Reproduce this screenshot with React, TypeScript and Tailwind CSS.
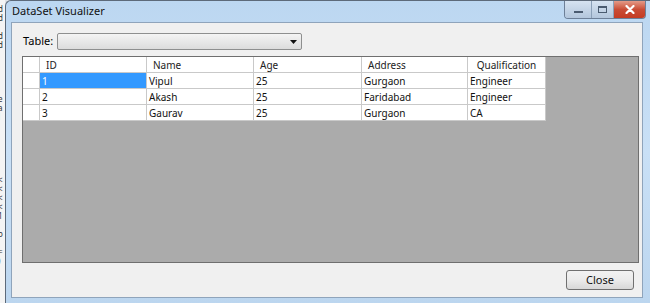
const COLS = [
  { key: 'ID', w: 107 },
  { key: 'Name', w: 107 },
  { key: 'Age', w: 108 },
  { key: 'Address', w: 106 },
  { key: 'Qualification', w: 78 },
]

const ROWS = [
  ['1', 'Vipul', '25', 'Gurgaon', 'Engineer'],
  ['2', 'Akash', '25', 'Faridabad', 'Engineer'],
  ['3', 'Gaurav', '25', 'Gurgaon', 'CA'],
]

// fragments of the code editor peeking out behind the dialog
const BEHIND = ['d', 'd', '', 'd', 'd', '', '', '', '', '', 'e', 'a', 'l', '', '', '', '', '', '', '<', '<', '<', '<', '1', '', 'o', '', '=', ')']

function TitleButtons() {
  return (
    <div className="flex h-[18px] self-start overflow-hidden rounded-b-[4px] border border-t-0 border-[#6d7f97]">
      <div className="flex w-[27px] items-center justify-center border-r border-[#8ba0b8] bg-gradient-to-b from-[#d6e3f1] to-[#b3c6dc]">
        <div className="mt-[5px] h-[2px] w-[9px] bg-[#4a5b70]" />
      </div>
      <div className="flex w-[22px] items-center justify-center border-r border-[#8ba0b8] bg-gradient-to-b from-[#d6e3f1] to-[#b3c6dc]">
        <div className="h-[7px] w-[9px] border border-t-2 border-[#4a5b70]" />
      </div>
      <div className="flex w-[31px] items-center justify-center bg-gradient-to-b from-[#e39a88] via-[#c94c35] to-[#c53b22]">
        <svg width="10" height="9" viewBox="0 0 10 9" aria-hidden>
          <path d="M1.5 1l7 7M8.5 1l-7 7" stroke="#fff" strokeWidth="2.2" strokeLinecap="round" />
        </svg>
      </div>
    </div>
  )
}

export default function App() {
  return (
    <div
      className="flex h-[303px] w-[650px] overflow-hidden bg-[#dfe3e8] text-[11px] text-black"
      style={{ fontFamily: '"Noto Sans", "Open Sans", sans-serif' }}
    >
      {/* editor behind */}
      <div className="flex w-[5px] shrink-0 flex-col overflow-hidden bg-[#f4f4f4] pt-[4px] text-[8px] leading-[9px] text-[#333]">
        {BEHIND.map((c, i) => (
          <span key={i} className="-ml-[2px] h-[9px] overflow-hidden whitespace-nowrap">
            {c || '\u00a0'}
          </span>
        ))}
      </div>

      {/* window */}
      <div className="flex min-w-0 flex-1 flex-col rounded-tl-[6px] border border-r-0 border-b-0 border-[#5d6a7a] bg-gradient-to-b from-[#bcd7f1] via-[#c9e0f6] to-[#bcd6ef]">
        <div className="flex h-[21px] shrink-0 items-center pl-[6px] pr-[4px]">
          <span className="text-[11px] text-[#111]">DataSet Visualizer</span>
          <div className="flex-1" />
          <TitleButtons />
        </div>

        <div className="mb-[5px] ml-[5px] mr-[7px] flex min-h-0 flex-1 flex-col border border-[#8fa4bb] bg-[#f0f0f0] pl-[10px] pr-[3px] pt-[10px]">
          {/* table chooser */}
          <div className="flex h-[17px] items-center gap-[4px] pl-[1px]">
            <span className="text-[11px]">Table:</span>
            <div className="flex h-[17px] w-[245px] items-center justify-end rounded-[2px] border border-[#8e8f8f] bg-gradient-to-b from-[#f4f4f4] to-[#dcdcdc] pr-[4px]">
              <svg width="7" height="4" viewBox="0 0 7 4" aria-hidden>
                <path d="M0 0h7L3.5 4z" fill="#111" />
              </svg>
            </div>
          </div>

          {/* grid */}
          <div className="mt-[6px] flex h-[207px] flex-col border border-[#6f6f6f] bg-[#ababab]">
            <div className="flex">
              <div className="flex flex-col">
                <div className="h-[16px] w-[17px] border-b border-r border-[#c9c9c9] bg-white" />
                {ROWS.map((r) => (
                  <div key={r[0]} className="h-[16px] w-[17px] border-b border-r border-[#c9c9c9] bg-white" />
                ))}
              </div>
              {COLS.map((c, ci) => (
                <div key={c.key} className="flex flex-col" style={{ width: c.w }}>
                  <div
                    className={`flex h-[16px] items-center border-b border-r border-[#c9c9c9] bg-white text-[10px] leading-none text-[#222] ${
                      ci === 4 ? 'justify-center' : 'pl-[6px]'
                    }`}
                  >
                    {c.key}
                  </div>
                  {ROWS.map((r, ri) => (
                    <div
                      key={ri}
                      className={`flex h-[16px] items-center border-b border-r border-[#c9c9c9] pl-[2px] text-[10px] leading-none ${
                        ri === 0 && ci === 0 ? 'bg-[#3399ff] text-white' : 'bg-white text-[#111]'
                      }`}
                    >
                      {r[ci]}
                    </div>
                  ))}
                </div>
              ))}
            </div>
          </div>

          {/* footer */}
          <div className="flex flex-1 items-start justify-end pr-[5px] pt-[7px]">
            <button className="h-[20px] w-[68px] rounded-[3px] border border-[#707070] bg-gradient-to-b from-[#f2f2f2] via-[#ebebeb] to-[#d8d8d8] text-[11px] text-[#111]">
              Close
            </button>
          </div>
        </div>
      </div>
    </div>
  )
}
